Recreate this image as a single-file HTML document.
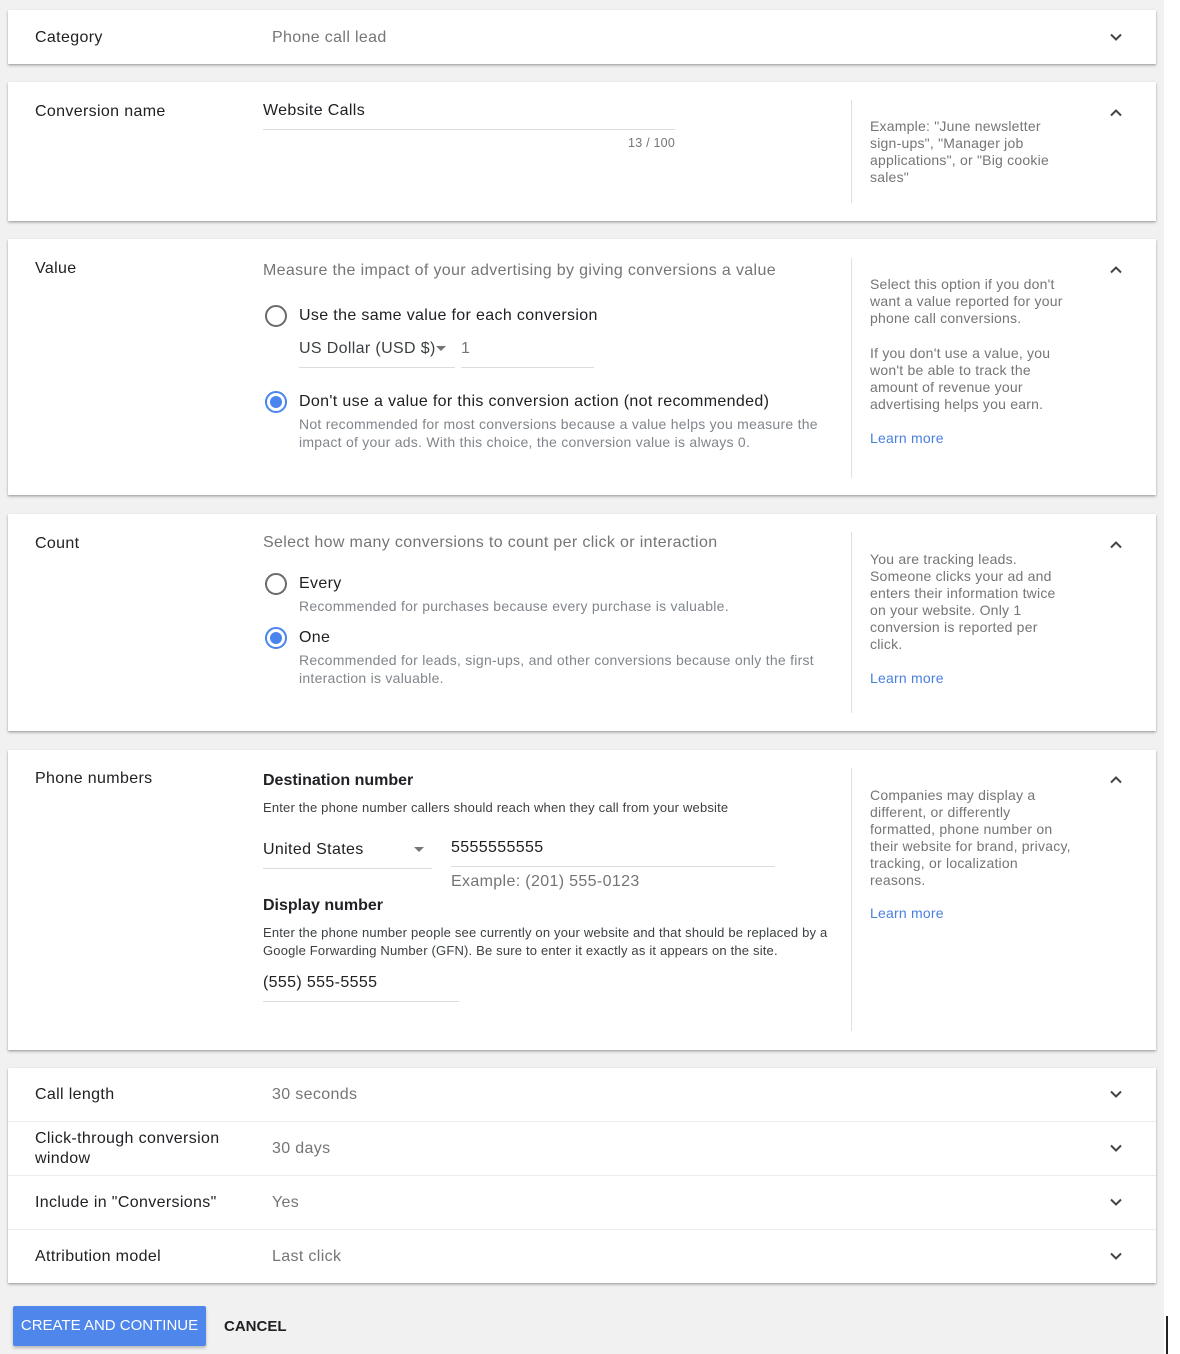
<!DOCTYPE html>
<html><head><meta charset="utf-8"><style>
*{margin:0;padding:0;box-sizing:border-box}
body{width:1180px;height:1354px;background:#fff;font-family:"Liberation Sans",Arial,sans-serif;position:relative;overflow:hidden;color:#202124}
.bg{position:absolute;left:0;top:0;width:1164px;height:1354px;background:#f1f1f2}
.card{position:absolute;left:8px;width:1148px;background:#fff;box-shadow:0 1px 2px rgba(0,0,0,.25),0 2px 3px rgba(0,0,0,.12)}
.t{position:absolute;white-space:nowrap;line-height:20px;font-size:16px;letter-spacing:0.35px;margin-top:1px}
.g{color:#757575}
.s{position:absolute;white-space:nowrap;font-size:14px;line-height:17px;color:#757575;letter-spacing:0.22px;margin-top:1px}
.h{position:absolute;white-space:nowrap;font-size:14px;line-height:18px;color:#80868b;letter-spacing:0.26px;margin-top:1px}
.sm{position:absolute;white-space:nowrap;font-size:13px;line-height:18px;color:#3c4043;letter-spacing:0.18px;margin-top:1px}
.ln{position:absolute;height:1px;background:#dadce0}
.vd{position:absolute;width:1px;background:#e0e0e0;left:851px}
.lm{color:#4a7fe0}
.b{font-weight:bold;letter-spacing:0}
.r{position:absolute;width:22px;height:22px;border-radius:50%;border:2px solid #6b6b6b}
.rs{border-color:#4a84ee}
.rs::after{content:"";position:absolute;left:3px;top:3px;width:12px;height:12px;border-radius:50%;background:#4a84ee}
.tri{position:absolute;width:0;height:0;border-left:5px solid transparent;border-right:5px solid transparent;border-top:5px solid #757575}
svg.c{position:absolute;left:1108px;width:16px;height:16px}
.row{position:absolute;left:8px;width:1148px;height:1px;background:#ececec}
</style></head><body>
<div class="bg"></div>

<div class="card" style="top:10px;height:54px"></div>
<div class="t" style="left:35px;top:27px">Category</div>
<div class="t g" style="left:272px;top:27px">Phone call lead</div>
<svg class="c" style="top:29px" viewBox="0 0 16 16"><path d="M3 5.5l5 5 5-5" fill="none" stroke="#444" stroke-width="2"/></svg>

<div class="card" style="top:82px;height:139px"></div>
<div class="t" style="left:35px;top:101px">Conversion name</div>
<div class="t" style="left:263px;top:100px">Website Calls</div>
<div class="ln" style="left:263px;width:412px;top:129px"></div>
<div class="s" style="left:600px;width:75px;text-align:right;top:134px;font-size:12.5px">13 / 100</div>
<div class="vd" style="top:100px;height:103px"></div>
<div class="s" style="left:870px;top:117px">Example: "June newsletter<br>sign-ups", "Manager job<br>applications", or "Big cookie<br>sales"</div>
<svg class="c" style="top:105px" viewBox="0 0 16 16"><path d="M3 10.5l5-5 5 5" fill="none" stroke="#444" stroke-width="2"/></svg>

<div class="card" style="top:239px;height:256px"></div>
<div class="t" style="left:35px;top:258px">Value</div>
<div class="t g" style="left:263px;top:260px">Measure the impact of your advertising by giving conversions a value</div>
<div class="r" style="left:265px;top:305px"></div>
<div class="t" style="left:299px;top:305px">Use the same value for each conversion</div>
<div class="t" style="left:299px;top:338px;color:#3c4043">US Dollar (USD $)</div>
<div class="tri" style="left:436px;top:346px"></div>
<div class="t" style="left:461px;top:338px;color:#757575">1</div>
<div class="ln" style="left:299px;width:156px;top:367px"></div>
<div class="ln" style="left:461px;width:133px;top:367px"></div>
<div class="r rs" style="left:265px;top:391px"></div>
<div class="t" style="left:299px;top:391px">Don't use a value for this conversion action (not recommended)</div>
<div class="h" style="left:299px;top:414px">Not recommended for most conversions because a value helps you measure the<br>impact of your ads. With this choice, the conversion value is always 0.</div>
<div class="vd" style="top:258px;height:220px"></div>
<div class="s" style="left:870px;top:275px">Select this option if you don't<br>want a value reported for your<br>phone call conversions.</div>
<div class="s" style="left:870px;top:344px">If you don't use a value, you<br>won't be able to track the<br>amount of revenue your<br>advertising helps you earn.</div>
<div class="s lm" style="left:870px;top:429px">Learn more</div>
<svg class="c" style="top:262px" viewBox="0 0 16 16"><path d="M3 10.5l5-5 5 5" fill="none" stroke="#444" stroke-width="2"/></svg>

<div class="card" style="top:514px;height:217px"></div>
<div class="t" style="left:35px;top:533px">Count</div>
<div class="t g" style="left:263px;top:532px">Select how many conversions to count per click or interaction</div>
<div class="r" style="left:265px;top:573px"></div>
<div class="t" style="left:299px;top:573px">Every</div>
<div class="h" style="left:299px;top:596px">Recommended for purchases because every purchase is valuable.</div>
<div class="r rs" style="left:265px;top:627px"></div>
<div class="t" style="left:299px;top:627px">One</div>
<div class="h" style="left:299px;top:650px">Recommended for leads, sign-ups, and other conversions because only the first<br>interaction is valuable.</div>
<div class="vd" style="top:532px;height:181px"></div>
<div class="s" style="left:870px;top:550px">You are tracking leads.<br>Someone clicks your ad and<br>enters their information twice<br>on your website. Only 1<br>conversion is reported per<br>click.</div>
<div class="s lm" style="left:870px;top:669px">Learn more</div>
<svg class="c" style="top:537px" viewBox="0 0 16 16"><path d="M3 10.5l5-5 5 5" fill="none" stroke="#444" stroke-width="2"/></svg>

<div class="card" style="top:750px;height:300px"></div>
<div class="t" style="left:35px;top:768px">Phone numbers</div>
<div class="t b" style="left:263px;top:770px">Destination number</div>
<div class="sm" style="left:263px;top:798px">Enter the phone number callers should reach when they call from your website</div>
<div class="t" style="left:263px;top:839px">United States</div>
<div class="tri" style="left:414px;top:847px"></div>
<div class="ln" style="left:263px;width:169px;top:868px"></div>
<div class="t" style="left:451px;top:837px">5555555555</div>
<div class="ln" style="left:451px;width:324px;top:866px"></div>
<div class="t g" style="left:451px;top:871px">Example: (201) 555-0123</div>
<div class="t b" style="left:263px;top:895px">Display number</div>
<div class="sm" style="left:263px;top:923px">Enter the phone number people see currently on your website and that should be replaced by a<br>Google Forwarding Number (GFN). Be sure to enter it exactly as it appears on the site.</div>
<div class="t" style="left:263px;top:972px">(555) 555-5555</div>
<div class="ln" style="left:263px;width:196px;top:1001px"></div>
<div class="vd" style="top:768px;height:263px"></div>
<div class="s" style="left:870px;top:786px">Companies may display a<br>different, or differently<br>formatted, phone number on<br>their website for brand, privacy,<br>tracking, or localization<br>reasons.</div>
<div class="s lm" style="left:870px;top:904px">Learn more</div>
<svg class="c" style="top:772px" viewBox="0 0 16 16"><path d="M3 10.5l5-5 5 5" fill="none" stroke="#444" stroke-width="2"/></svg>

<div class="card" style="top:1068px;height:215px"></div>
<div class="row" style="top:1121px"></div>
<div class="row" style="top:1175px"></div>
<div class="row" style="top:1229px"></div>
<div class="t" style="left:35px;top:1084px">Call length</div>
<div class="t g" style="left:272px;top:1084px">30 seconds</div>
<svg class="c" style="top:1086px" viewBox="0 0 16 16"><path d="M3 5.5l5 5 5-5" fill="none" stroke="#444" stroke-width="2"/></svg>
<div class="t" style="left:35px;top:1128px">Click-through conversion<br>window</div>
<div class="t g" style="left:272px;top:1138px">30 days</div>
<svg class="c" style="top:1140px" viewBox="0 0 16 16"><path d="M3 5.5l5 5 5-5" fill="none" stroke="#444" stroke-width="2"/></svg>
<div class="t" style="left:35px;top:1192px">Include in "Conversions"</div>
<div class="t g" style="left:272px;top:1192px">Yes</div>
<svg class="c" style="top:1194px" viewBox="0 0 16 16"><path d="M3 5.5l5 5 5-5" fill="none" stroke="#444" stroke-width="2"/></svg>
<div class="t" style="left:35px;top:1246px">Attribution model</div>
<div class="t g" style="left:272px;top:1246px">Last click</div>
<svg class="c" style="top:1248px" viewBox="0 0 16 16"><path d="M3 5.5l5 5 5-5" fill="none" stroke="#444" stroke-width="2"/></svg>

<div style="position:absolute;left:13px;top:1306px;width:193px;height:40px;background:#4f86ec;border-radius:2px;box-shadow:0 2px 3px rgba(0,0,0,.25);color:#fff;font-size:15px;line-height:40px;text-align:center">CREATE AND CONTINUE</div>
<div class="t b" style="left:224px;top:1316px;font-size:15px">CANCEL</div>
<div style="position:absolute;left:1166px;top:1316px;width:2px;height:38px;background:#222"></div>
</body></html>
